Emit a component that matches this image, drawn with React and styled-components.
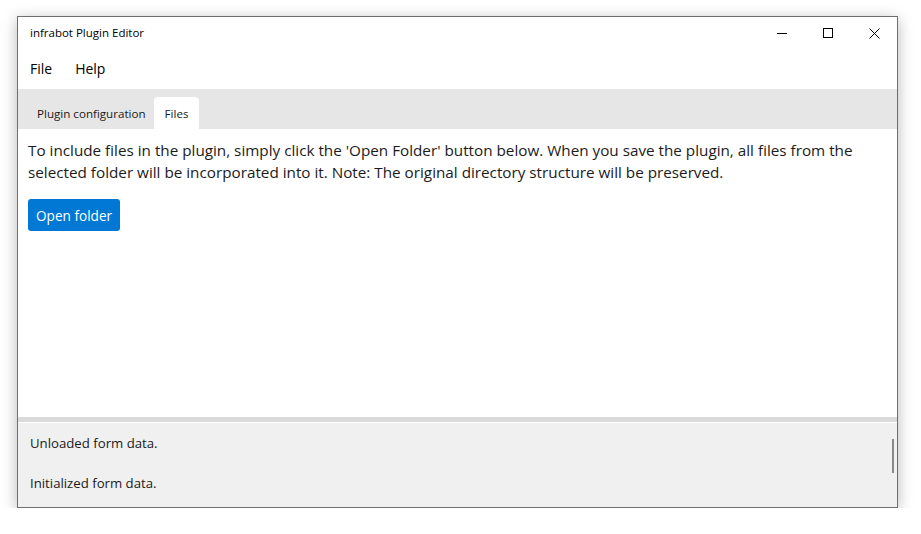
import styled, { createGlobalStyle } from "styled-components";

const GlobalStyle = createGlobalStyle`
  *, *::before, *::after {
    box-sizing: border-box;
  }
  html, body {
    margin: 0;
    padding: 0;
    background: #ffffff;
  }
  body {
    font-family: "Open Sans", "Noto Sans", sans-serif;
  }
`;

function CaptionIcon({ kind }) {
  if (kind === "min") {
    return (
      <svg width="10" height="10" viewBox="0 0 10 10">
        <path d="M0 5.5h10" stroke="#000" strokeWidth="1" />
      </svg>
    );
  }
  if (kind === "max") {
    return (
      <svg width="10" height="10" viewBox="0 0 10 10">
        <rect x="0.5" y="0.5" width="9" height="9" fill="none" stroke="#000" strokeWidth="1" />
      </svg>
    );
  }
  return (
    <svg width="11" height="11" viewBox="0 0 11 11">
      <path d="M0.5 0.5l10 10M10.5 0.5l-10 10" stroke="#000" strokeWidth="1" />
    </svg>
  );
}

function App() {
  return (
    <>
      <GlobalStyle />
      <Desktop>
        <Window>
          <TitleBar>
            <Title>infrabot Plugin Editor</Title>
            <Captions>
              <CaptionButton><CaptionIcon kind="min" /></CaptionButton>
              <CaptionButton><CaptionIcon kind="max" /></CaptionButton>
              <CaptionButton><CaptionIcon kind="close" /></CaptionButton>
            </Captions>
          </TitleBar>
          <MenuBar>
            <MenuItem>File</MenuItem>
            <MenuItem>Help</MenuItem>
          </MenuBar>
          <TabStrip>
            <Tab>Plugin configuration</Tab>
            <Tab active>Files</Tab>
          </TabStrip>
          <TabBody>
            <Description>
              To include files in the plugin, simply click the 'Open Folder' button below. When you save the plugin, all files from the
              <br />
              selected folder will be incorporated into it. Note: The original directory structure will be preserved.
            </Description>
            <PrimaryButton>Open folder</PrimaryButton>
          </TabBody>
          <Splitter />
          <LogPanel>
            <LogLine>Unloaded form data.</LogLine>
            <LogLine>Initialized form data.</LogLine>
            <ScrollThumb />
          </LogPanel>
        </Window>
      </Desktop>
    </>
  );
}

const Desktop = styled.div`
  padding: 16px 0 0 17px;
`;

const Window = styled.div`
  width: 881px;
  height: 492px;
  border: 1px solid #6f6f6f;
  background: #ffffff;
  box-shadow: 0 3px 14px rgba(0, 0, 0, 0.28);
  display: flex;
  flex-direction: column;
  overflow: hidden;
`;

const TitleBar = styled.div`
  height: 31px;
  flex-shrink: 0;
  display: flex;
  align-items: center;
  justify-content: space-between;
  padding-left: 12px;
`;

const Title = styled.span`
  font-size: 11.5px;
  color: #000;
`;

const Captions = styled.div`
  display: flex;
  height: 100%;
  padding-top: 1px;
`;

const CaptionButton = styled.div`
  width: 46px;
  height: 100%;
  display: flex;
  align-items: center;
  justify-content: center;
`;

const MenuBar = styled.div`
  height: 41px;
  flex-shrink: 0;
  display: flex;
  align-items: center;
  gap: 23px;
  padding-left: 12px;
`;

const MenuItem = styled.span`
  font-size: 14px;
  color: #000;
`;

const TabStrip = styled.div`
  height: 40px;
  flex-shrink: 0;
  background: #e6e6e6;
  display: flex;
  align-items: flex-end;
  padding-left: 11px;
`;

const Tab = styled.div`
  height: 32px;
  padding: ${(p) => (p.active ? "0 11px" : "0 8px 0 8px")};
  display: flex;
  align-items: center;
  font-size: 11.6px;
  color: #1a1a1a;
  border-radius: 4px 4px 0 0;
  background: ${(p) => (p.active ? "#ffffff" : "transparent")};
`;

const TabBody = styled.div`
  flex: 1;
  padding: 10px 10px 0;
  display: flex;
  flex-direction: column;
  align-items: flex-start;
`;

const Description = styled.p`
  margin: 0 0 16px;
  font-size: 15.25px;
  line-height: 22px;
  color: #1b1b1b;
  white-space: nowrap;
`;

const PrimaryButton = styled.button`
  height: 32px;
  padding: 0 8px;
  border: none;
  border-radius: 3px;
  background: #0078d4;
  color: #ffffff;
  font-family: inherit;
  font-size: 13.6px;
`;

const Splitter = styled.div`
  height: 6px;
  flex-shrink: 0;
  background: #dadada;
  border-bottom: 1px solid #ffffff;
`;

const LogPanel = styled.div`
  position: relative;
  height: 84px;
  flex-shrink: 0;
  background: #f0f0f0;
  padding: 9px 12px 0;
  display: flex;
  flex-direction: column;
  gap: 18px;
`;

const LogLine = styled.div`
  font-size: 13.2px;
  line-height: 22px;
  color: #1a1a1a;
`;

const ScrollThumb = styled.div`
  position: absolute;
  right: 3px;
  top: 16px;
  width: 2px;
  height: 34px;
  background: #8a8a8a;
`;

export default App;
